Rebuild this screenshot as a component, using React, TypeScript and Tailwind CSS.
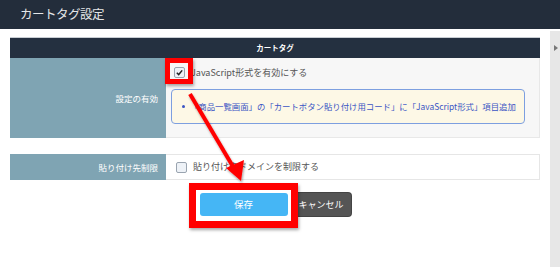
import React from "react";

const font = { fontFamily: '"Noto Sans CJK JP", "Noto Sans", sans-serif' };

const CheckBox: React.FC<{ checked?: boolean }> = ({ checked }) => (
  <span className="inline-flex h-[11px] w-[11px] shrink-0 items-center justify-center rounded-[2px] border border-[#9aa4b0] bg-[#eef2f7]">
    {checked && (
      <svg viewBox="0 0 10 10" className="h-[9px] w-[9px]">
        <path d="M2 5.2 L4.1 7.3 L8 2.6" fill="none" stroke="#222" strokeWidth="1.6" />
      </svg>
    )}
  </span>
);

const App: React.FC = () => {
  return (
    <div className="relative h-[267px] w-[560px] overflow-hidden bg-white" style={font}>
      <div className="flex h-[29px] items-center bg-[#232d3b] pl-[20px] text-[12.5px] tracking-[-0.5px] text-[#e4e6e8]">
        カートタグ設定
      </div>
      <div className="flex">
        <div className="w-[550px] px-[10px] pt-[8px]">
          <div className="flex h-[21px] items-center justify-center border-t border-[#c9ced4] bg-[#243040] text-[7.5px] font-bold text-white">
            カートタグ
          </div>
          <div className="flex h-[80px]">
            <div className="flex w-[156px] items-center justify-end bg-[#7fa4b3] pr-[8px] text-[8.5px] text-white">
              設定の有効
            </div>
            <div className="flex-1 border-r border-b border-[#e8e8e8] bg-[#f7f7f7] pl-[5px] pr-[14px] pt-[8px]">
              <label className="flex items-center gap-[6px] pl-[3px] text-[9px] text-[#555]">
                <CheckBox checked />
                JavaScript形式を有効にする
              </label>
              <div className="mt-[9px] flex h-[35px] items-center whitespace-nowrap rounded-[4px] border border-[#7d9fe0] bg-[#fdf8e6] pl-[10px] text-[8.4px] text-[#3b55c4]">
                <span className="mr-[5px] h-[3px] w-[3px] rounded-full bg-[#3b55c4]" />
                「商品一覧画面」の「カートボタン貼り付け用コード」に「JavaScript形式」項目追加
              </div>
            </div>
          </div>
          <div className="mt-[16px] flex h-[26px]">
            <div className="flex w-[156px] items-center justify-end bg-[#7fa4b3] pr-[8px] text-[8.5px] text-white">
              貼り付け先制限
            </div>
            <div className="flex flex-1 items-center gap-[6px] border border-l-0 border-[#e6e6e6] bg-white pl-[10px] text-[9px] text-[#555]">
              <CheckBox />
              貼り付け先ドメインを制限する
            </div>
          </div>
          <div className="mt-[13px] flex justify-center gap-[4px]">
            <button className="h-[23px] w-[88px] rounded-[3px] bg-[#45b6f5] text-[9.5px] text-white">保存</button>
            <button className="h-[23px] w-[59px] rounded-[3px] bg-[#555555] text-[9px] text-white shadow-[0_0_0_1px_#444]">
              キャンセル
            </button>
          </div>
        </div>
        <div className="relative mt-[2px] h-[236px] w-[10px] bg-[#e7e7e7]">
          <span className="absolute left-[4px] top-[14px] h-0 w-0 border-y-[3px] border-l-[4px] border-y-transparent border-l-[#777]" />
        </div>
      </div>

      {/* annotations */}
      <div className="absolute left-[165px] top-[58px] h-[26px] w-[28px] border-[5px] border-[#ff0000] shadow-[1px_2px_3px_rgba(0,0,0,0.35)]" />
      <div className="absolute left-[189px] top-[183px] h-[45px] w-[109px] border-[7px] border-[#ff0000] shadow-[1px_2px_3px_rgba(0,0,0,0.35)]" />
      <svg className="absolute left-0 top-0" width="560" height="267" viewBox="0 0 560 267">
        <defs>
          <filter id="sh" x="-20%" y="-20%" width="140%" height="140%">
            <feDropShadow dx="1" dy="2" stdDeviation="1.2" floodColor="#000" floodOpacity="0.35" />
          </filter>
        </defs>
        <g filter="url(#sh)">
          <line x1="190" y1="94" x2="235" y2="170" stroke="#ff0000" strokeWidth="4" />
          <polygon points="241,181 226,168 244,160" fill="#ff0000" />
        </g>
      </svg>
    </div>
  );
};

export default App;
